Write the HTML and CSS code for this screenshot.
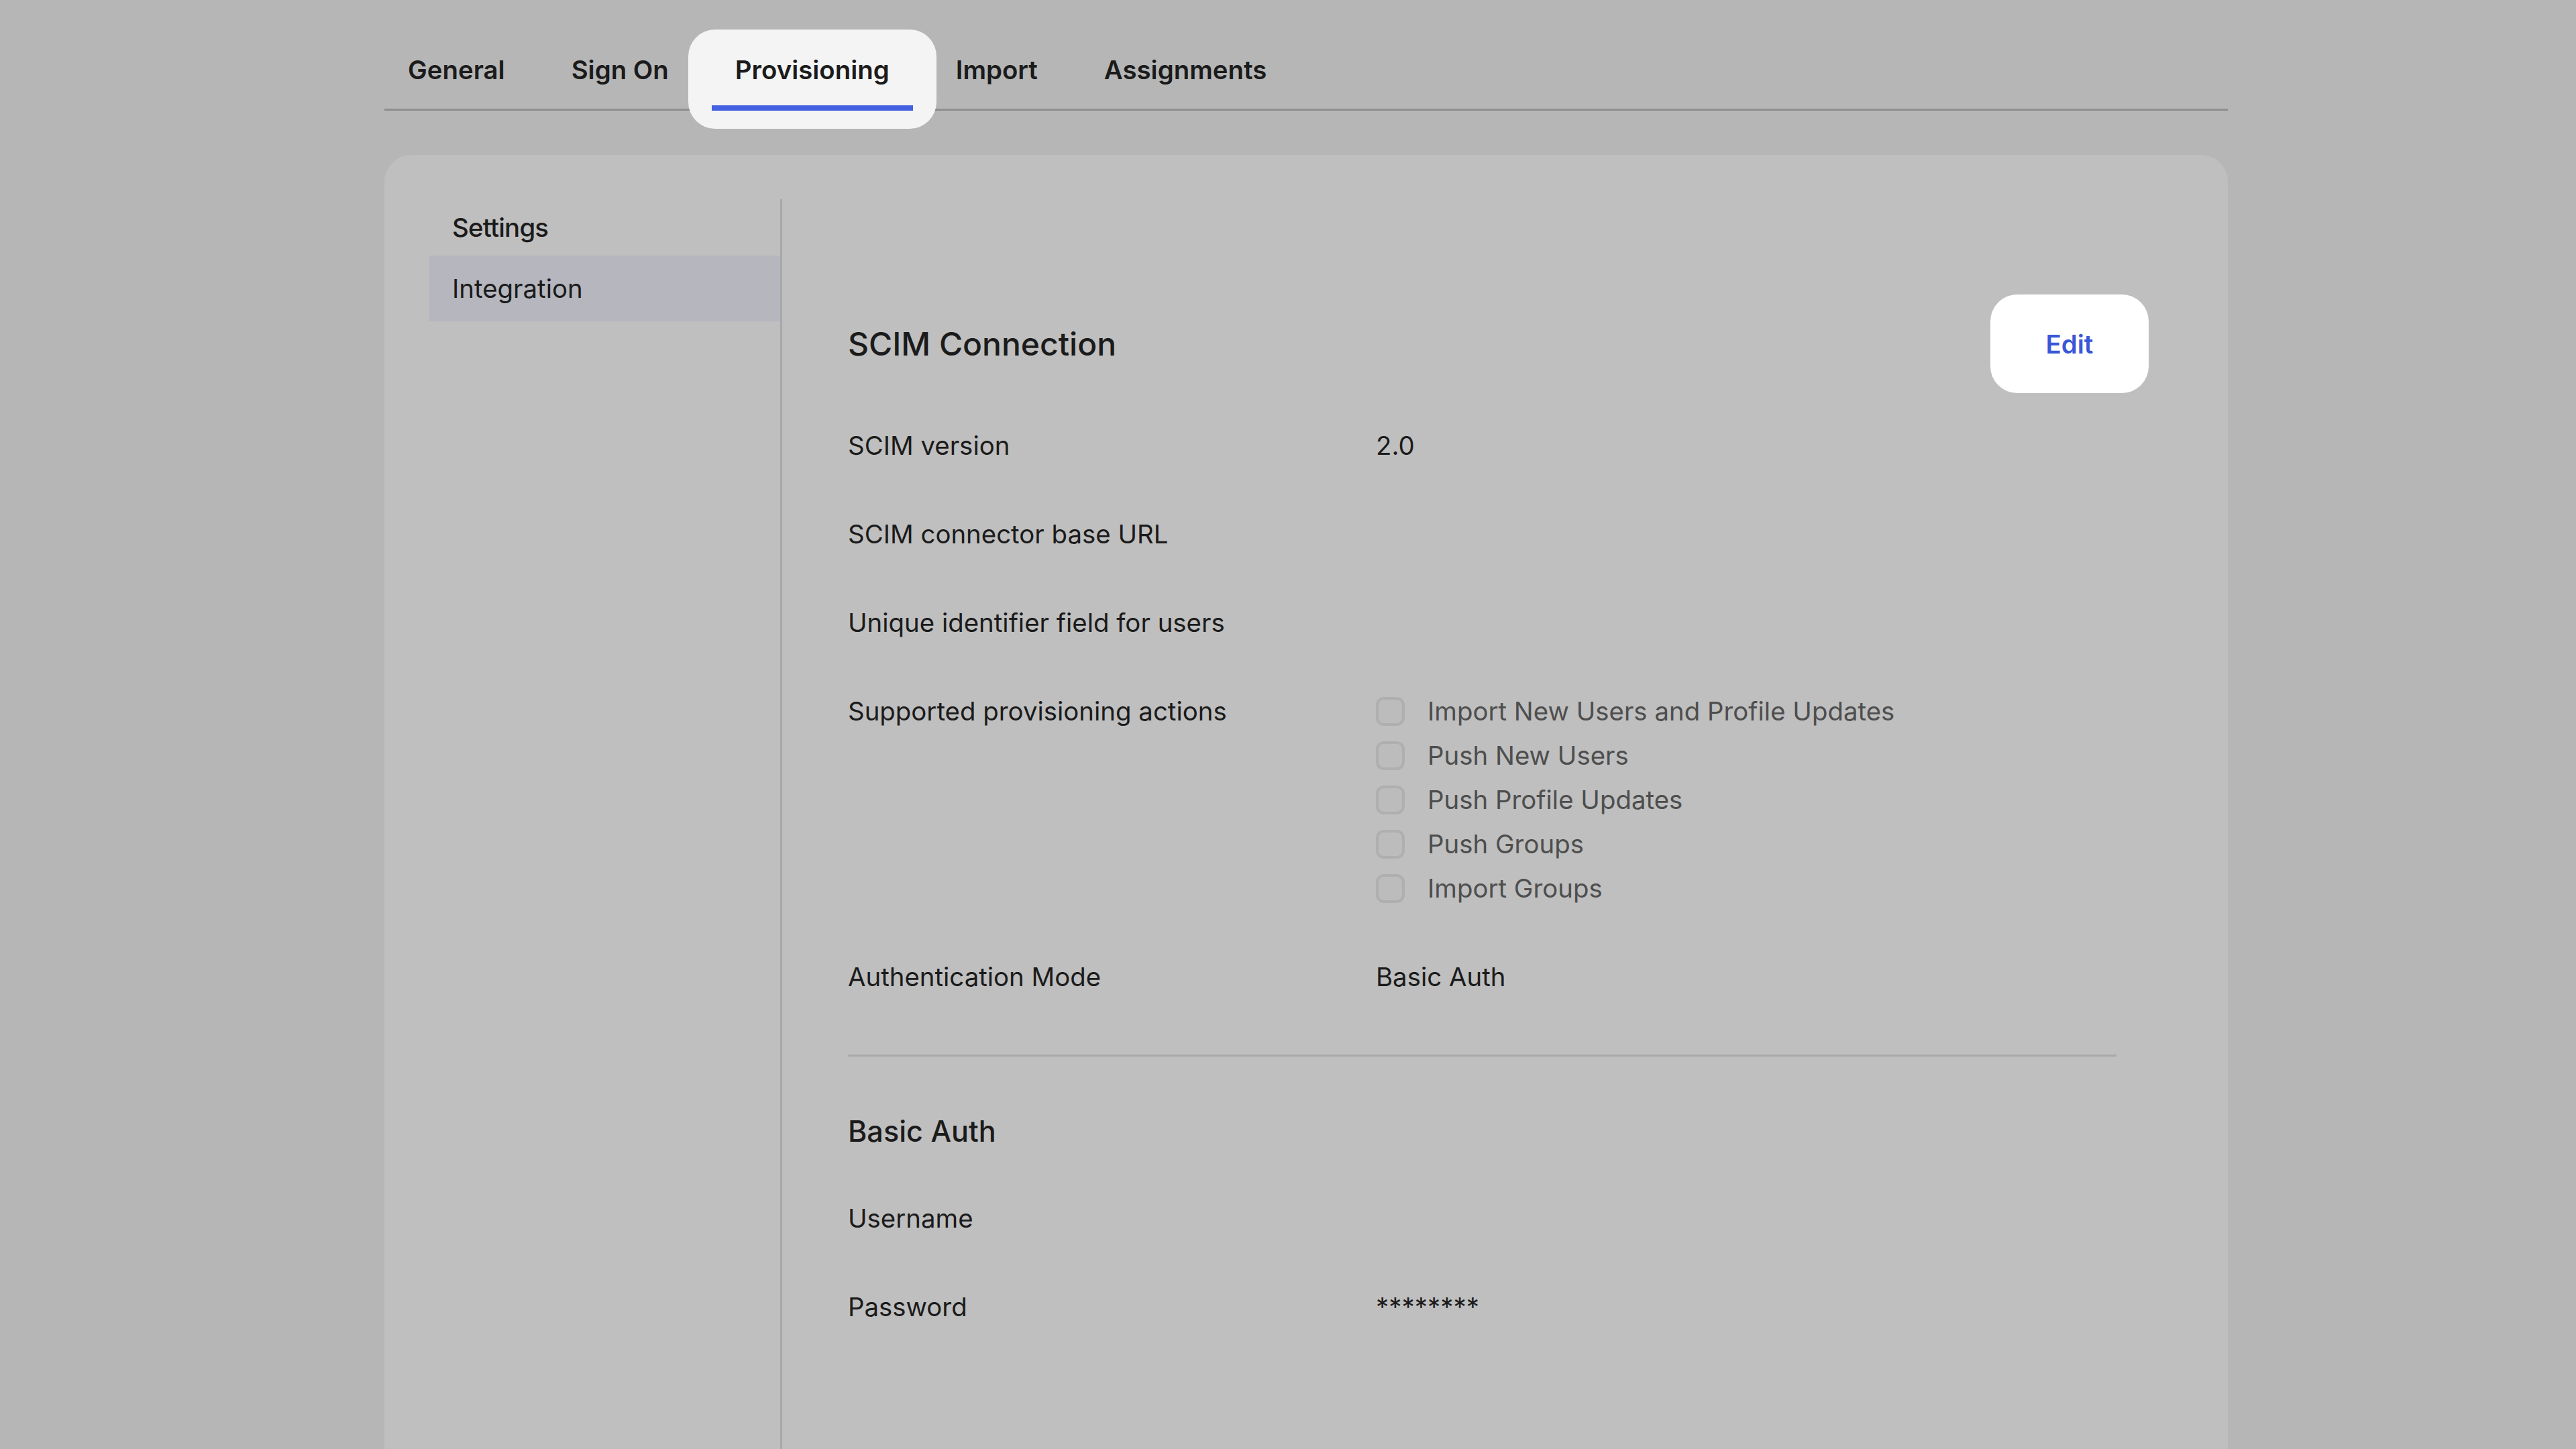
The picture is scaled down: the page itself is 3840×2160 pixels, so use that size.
FILE: index.html
```
<html>
<head>
    <title>Provisioning</title>
    <meta charset="UTF-8">
    <link rel="stylesheet" href="styles.css">
</head>
<body>
    <div class="app-page">
        <!-- Tabs -->
        <nav class="tabs">
            <div class="tab">General</div>
            <div class="tab">Sign On</div>
            <div class="tab active">Provisioning</div>
            <div class="tab">Import</div>
            <div class="tab">Assignments</div>
        </nav>

        <div class="panel">
            <aside class="side-nav">
                <div class="side-title">Settings</div>
                <div class="side-item selected">Integration</div>
            </aside>

            <main class="content">
                <div class="section-header">
                    <h2>SCIM Connection</h2>
                    <button type="button" class="edit-btn">Edit</button>
                </div>

                <div class="field-list">
                    <div class="field">
                        <div class="field-label">SCIM version</div>
                        <div class="field-value">2.0</div>
                    </div>
                    <div class="field">
                        <div class="field-label">SCIM connector base URL</div>
                        <div class="field-value"></div>
                    </div>
                    <div class="field">
                        <div class="field-label">Unique identifier field for users</div>
                        <div class="field-value"></div>
                    </div>
                    <div class="field">
                        <div class="field-label">Supported provisioning actions</div>
                        <div class="field-value checks">
                            <label class="check"><span class="box"></span>Import New Users and Profile Updates</label>
                            <label class="check"><span class="box"></span>Push New Users</label>
                            <label class="check"><span class="box"></span>Push Profile Updates</label>
                            <label class="check"><span class="box"></span>Push Groups</label>
                            <label class="check"><span class="box"></span>Import Groups</label>
                        </div>
                    </div>
                    <div class="field">
                        <div class="field-label">Authentication Mode</div>
                        <div class="field-value">Basic Auth</div>
                    </div>
                </div>

                <hr class="divider">

                <h3>Basic Auth</h3>

                <div class="field-list">
                    <div class="field">
                        <div class="field-label">Username</div>
                        <div class="field-value"></div>
                    </div>
                    <div class="field">
                        <div class="field-label">Password</div>
                        <div class="field-value">********</div>
                    </div>
                </div>
            </main>
        </div>
    </div>
</body>
</html>
```

FILE: styles.css
```
:root {
    --page-bg: #b6b6b6;
    --panel-bg: #bfbfbf;
    --text: #1b1b1b;
    --text-muted: #4e4e4e;
    --line: #8e8e8e;
    --accent: #4361e0;
}

body {
    margin: 0;
    background: var(--page-bg);
    font-family: 'Inter', 'Noto Sans', sans-serif;
    color: var(--text);
    overflow: hidden;
    height: 2160px;
}

.app-page {
    width: 2748px;
    margin-left: 573px;
}

/* Tabs */
.tabs {
    display: flex;
    gap: 99px;
    padding: 80px 0 0 35px;
    border-bottom: 3px solid var(--line);
}

.tab {
    position: relative;
    isolation: isolate;
    font-size: 38.4px;
    font-weight: 600;
    line-height: 48px;
    padding-bottom: 34px;
}

.tab.active::before {
    content: '';
    position: absolute;
    top: -36px;
    bottom: -30px;
    left: -70px;
    right: -70px;
    background: #f4f4f4;
    border-radius: 40px;
    z-index: -1;
}

.tab.active::after {
    content: '';
    position: absolute;
    left: -35px;
    right: -35px;
    bottom: -3px;
    height: 8px;
    background: var(--accent);
}

/* Panel */
.panel {
    margin-top: 66px;
    background: var(--panel-bg);
    border-radius: 40px 40px 0 0;
    padding-top: 66px;
    min-height: 2000px;
    display: flex;
}

.side-nav {
    width: 523px;
    margin-left: 67px;
    border-right: 3px solid #a8a8a8;
    flex-shrink: 0;
}

.side-title {
    font-size: 38.4px;
    font-weight: 500;
    letter-spacing: -0.8px;
    line-height: 48px;
    padding: 18px 34px;
}

.side-item {
    font-size: 38.4px;
    line-height: 48px;
    padding: 25px 34px;
}

.side-item.selected {
    background: #b5b6be;
}

.content {
    width: 1891px;
    margin-left: 98px;
    padding-top: 142px;
}

.section-header {
    display: flex;
    align-items: center;
    justify-content: space-between;
}

.section-header h2 {
    margin: 0;
    font-size: 48px;
    font-weight: 500;
}

.edit-btn {
    width: 236px;
    height: 147px;
    margin-right: -48px;
    border: none;
    border-radius: 40px;
    background: #ffffff;
    color: #3a57d8;
    font-family: inherit;
    font-size: 38.4px;
    font-weight: 600;
}

.field-list {
    display: flex;
    flex-direction: column;
    gap: 84px;
    margin-top: 54px;
}

.field {
    display: flex;
    font-size: 38.4px;
    line-height: 48px;
}

.field-label {
    width: 787px;
    flex-shrink: 0;
}

.checks {
    display: flex;
    flex-direction: column;
    gap: 18px;
}

.check {
    display: flex;
    align-items: center;
    gap: 34px;
    color: var(--text-muted);
}

.box {
    width: 35px;
    height: 35px;
    border: 4px solid #afafaf;
    border-radius: 12px;
    background: #bcbcbc;
}

.divider {
    margin: 92px 0 0 0;
    border: none;
    border-top: 3px solid #a9a9a9;
}

.content h3 {
    margin: 85px 0 0 0;
    font-size: 43.2px;
    font-weight: 500;
    line-height: 52px;
}

.content h3 + .field-list {
    margin-top: 80px;
}
```
